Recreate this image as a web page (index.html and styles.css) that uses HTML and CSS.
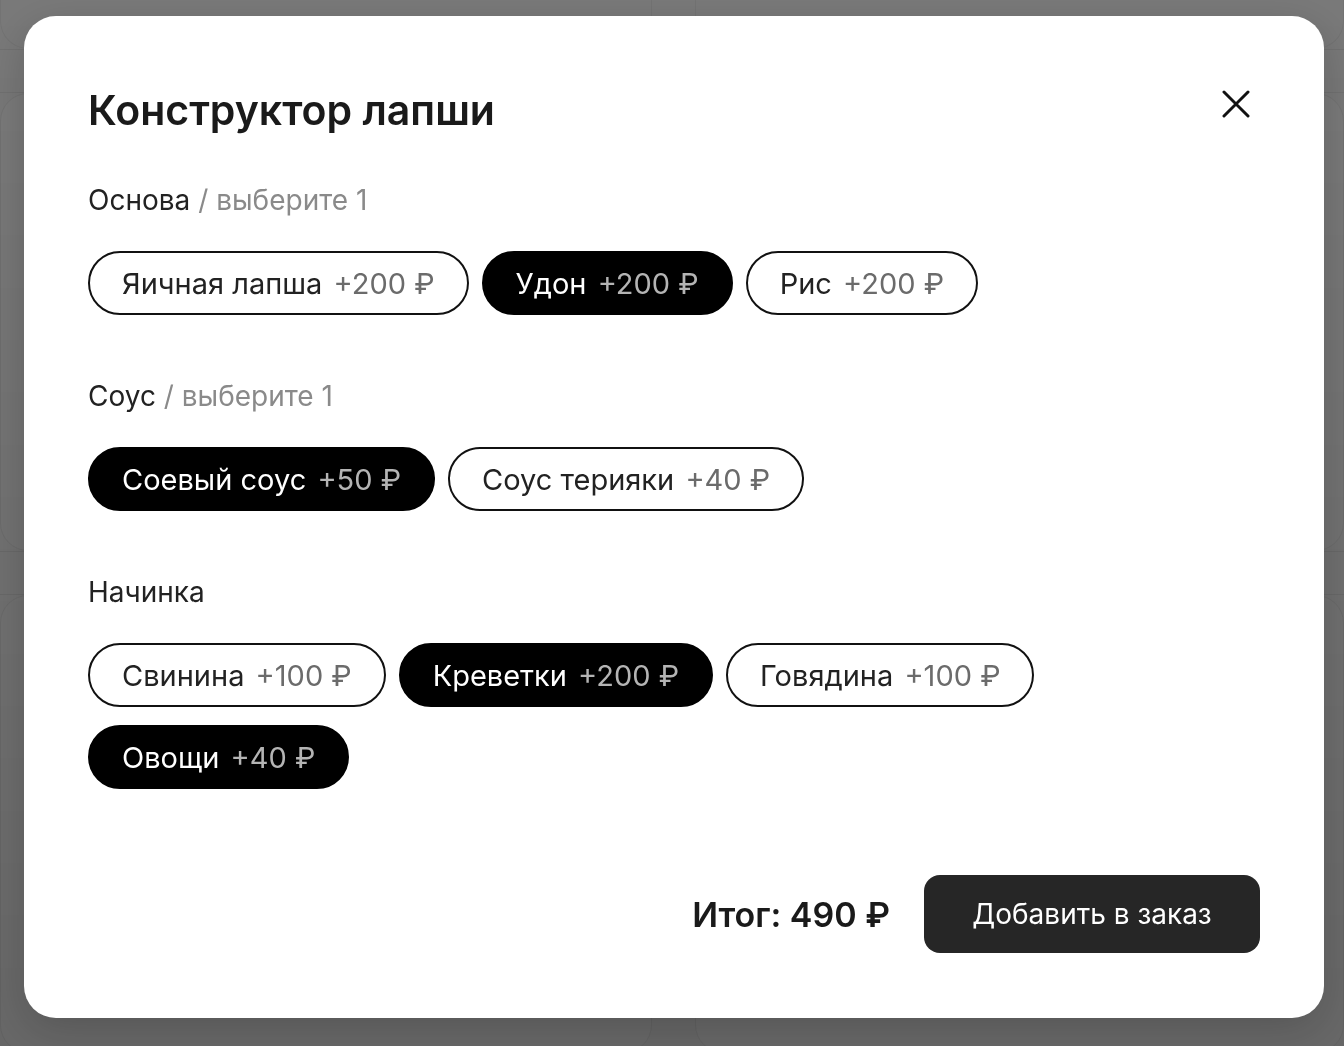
FILE: index.html
```html
<!DOCTYPE html>
<html lang="ru">
<head>
    <meta charset="UTF-8">
    <meta name="viewport" content="width=device-width, initial-scale=1.0">
    <title>Конструктор лапши</title>
    <link rel="stylesheet" href="styles.css">
</head>
<body>
    <!-- Page behind the modal -->
    <div class="page">
        <div class="page-top">
            <div class="page-card"></div>
            <div class="page-card"></div>
        </div>
        <div class="page-band"></div>
        <div class="page-grid">
            <div class="page-card tall"></div>
            <div class="page-card tall"></div>
        </div>
        <div class="page-band"></div>
        <div class="page-grid">
            <div class="page-card tall"></div>
            <div class="page-card tall"></div>
        </div>
    </div>

    <div class="overlay">
        <div class="modal">
            <div class="modal-header">
                <h1>Конструктор лапши</h1>
                <button class="close" aria-label="Закрыть">
                    <svg width="28" height="28" viewBox="0 0 28 28" fill="none">
                        <path d="M2 2L26 26M26 2L2 26" stroke="#111" stroke-width="3" stroke-linecap="round"/>
                    </svg>
                </button>
            </div>

            <div class="group">
                <div class="group-title">Основа <span class="hint">/ выберите 1</span></div>
                <div class="chips">
                    <button class="chip">Яичная лапша <span class="price">+200 ₽</span></button>
                    <button class="chip active">Удон <span class="price">+200 ₽</span></button>
                    <button class="chip">Рис <span class="price">+200 ₽</span></button>
                </div>
            </div>

            <div class="group">
                <div class="group-title">Соус <span class="hint">/ выберите 1</span></div>
                <div class="chips">
                    <button class="chip active">Соевый соус <span class="price">+50 ₽</span></button>
                    <button class="chip">Соус терияки <span class="price">+40 ₽</span></button>
                </div>
            </div>

            <div class="group">
                <div class="group-title">Начинка</div>
                <div class="chips">
                    <button class="chip">Свинина <span class="price">+100 ₽</span></button>
                    <button class="chip active">Креветки <span class="price">+200 ₽</span></button>
                    <button class="chip">Говядина <span class="price">+100 ₽</span></button>
                    <button class="chip active">Овощи <span class="price">+40 ₽</span></button>
                </div>
            </div>

            <div class="modal-footer">
                <div class="total">Итог: 490 ₽</div>
                <button class="add">Добавить в заказ</button>
            </div>
        </div>
    </div>
</body>
</html>
```

FILE: styles.css
```css
/* Base */
body {
    margin: 0;
    font-family: 'Inter', 'Noto Sans', sans-serif;
    background: #f3f3f3;
    color: #1c1c1c;
    overflow: hidden;
}

/* Page behind the overlay */
.page-top,
.page-grid {
    display: grid;
    grid-template-columns: 652px 1fr;
    gap: 43px;
}

.page-top .page-card {
    height: 48px;
    border: 1px solid #e6e6e6;
    border-top: none;
    border-radius: 0 0 28px 28px;
}

.page-band {
    height: 42px;
    border-top: 1px solid #e3e3e3;
    border-bottom: 1px solid #e3e3e3;
}

.page-card.tall {
    height: 456px;
    border: 1px solid #e6e6e6;
    border-radius: 28px;
    background: #f6f6f6;
}

/* Overlay */
.overlay {
    position: fixed;
    inset: 0;
    background: linear-gradient(180deg, rgba(0, 0, 0, 0.5), rgba(0, 0, 0, 0.58));
}

/* Modal box */
.modal {
    position: absolute;
    top: 16px;
    left: 24px;
    width: 1300px;
    height: 1002px;
    box-sizing: border-box;
    padding: 70px 64px 65px 64px;
    background: #fff;
    border-radius: 32px;
    box-shadow: 0 12px 40px rgba(0, 0, 0, 0.18);
    display: flex;
    flex-direction: column;
}

.modal-header {
    display: flex;
    justify-content: space-between;
    align-items: flex-start;
    margin-bottom: 48px;
}

h1 {
    margin: 0;
    font-size: 41px;
    line-height: 48px;
    font-weight: 600;
    color: #1a1a1a;
}

.close {
    border: none;
    background: none;
    padding: 0;
    margin: 4px 10px 0 0;
    cursor: pointer;
}

/* Option groups */
.group {
    margin-bottom: 63px;
}

.group-title {
    font-size: 28px;
    line-height: 36px;
    color: #222;
    margin-bottom: 33px;
}

.hint {
    color: #8a8a8a;
}

.chips {
    display: flex;
    flex-wrap: wrap;
    column-gap: 13px;
    row-gap: 18px;
}

.chip {
    height: 64px;
    padding: 0 32px;
    border: 2px solid #111;
    border-radius: 32px;
    background: #fff;
    color: #222;
    font-family: inherit;
    font-size: 29px;
    cursor: pointer;
}

.chip .price {
    margin-left: 3px;
    color: #6b6b6b;
}

.chip.active {
    background: #000;
    border-color: #000;
    color: #fff;
}

.chip.active .price {
    color: #b4b4b4;
}

/* Footer */
.modal-footer {
    margin-top: auto;
    display: flex;
    justify-content: flex-end;
    align-items: center;
    gap: 34px;
}

.total {
    font-size: 34px;
    font-weight: 600;
    color: #1a1a1a;
}

.add {
    width: 336px;
    height: 78px;
    border: none;
    border-radius: 16px;
    background: #262626;
    color: #fff;
    font-family: inherit;
    font-size: 28px;
    cursor: pointer;
}
```
